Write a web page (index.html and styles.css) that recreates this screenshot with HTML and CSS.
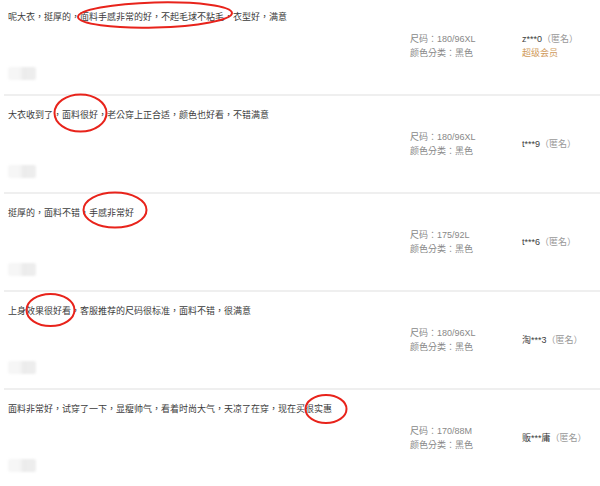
FILE: index.html
```html
<!DOCTYPE html>
<html lang="zh-Hant">
<head>
    <meta charset="UTF-8">
    <meta name="viewport" content="width=device-width, initial-scale=1.0">
    <title>累计评价</title>
    <link rel="stylesheet" href="styles.css">
</head>
<body>
    <div class="rate-list">

        <div class="rate-row">
            <div class="rate-main">
                <p class="rate-text">呢大衣，挺厚的，面料手感非常的好，不起毛球不粘毛，衣型好，满意</p>
                <div class="rate-date"></div>
            </div>
            <div class="rate-sku">
                <p>尺码：180/96XL</p>
                <p>颜色分类：黑色</p>
            </div>
            <div class="rate-user">
                <p><span class="nick">z***0</span><span class="anon">（匿名）</span></p>
                <p class="vip">超级会员</p>
            </div>
            <svg class="mark" viewBox="0 0 600 98">
                <ellipse cx="155" cy="19" rx="77" ry="12.5" transform="rotate(-1.5 155 19)"/>
            </svg>
        </div>

        <div class="rate-row">
            <div class="rate-main">
                <p class="rate-text">大衣收到了，面料很好，老公穿上正合适，颜色也好看，不错满意</p>
                <div class="rate-date"></div>
            </div>
            <div class="rate-sku">
                <p>尺码：180/96XL</p>
                <p>颜色分类：黑色</p>
            </div>
            <div class="rate-user">
                <p><span class="nick">t***9</span><span class="anon">（匿名）</span></p>
            </div>
            <svg class="mark" viewBox="0 0 600 98">
                <ellipse cx="80.5" cy="19" rx="26" ry="18.5"/>
            </svg>
        </div>

        <div class="rate-row">
            <div class="rate-main">
                <p class="rate-text">挺厚的，面料不错，手感非常好</p>
                <div class="rate-date"></div>
            </div>
            <div class="rate-sku">
                <p>尺码：175/92L</p>
                <p>颜色分类：黑色</p>
            </div>
            <div class="rate-user">
                <p><span class="nick">t***6</span><span class="anon">（匿名）</span></p>
            </div>
            <svg class="mark" viewBox="0 0 600 98">
                <ellipse cx="115" cy="18" rx="31.5" ry="17.5"/>
            </svg>
        </div>

        <div class="rate-row">
            <div class="rate-main">
                <p class="rate-text">上身效果很好看，客服推荐的尺码很标准，面料不错，很满意</p>
                <div class="rate-date"></div>
            </div>
            <div class="rate-sku">
                <p>尺码：180/96XL</p>
                <p>颜色分类：黑色</p>
            </div>
            <div class="rate-user">
                <p><span class="nick">淘***3</span><span class="anon">（匿名）</span></p>
            </div>
            <svg class="mark" viewBox="0 0 600 98">
                <ellipse cx="50.5" cy="20" rx="24" ry="16"/>
            </svg>
        </div>

        <div class="rate-row">
            <div class="rate-main">
                <p class="rate-text">面料非常好，试穿了一下，显瘦帅气，看着时尚大气，天凉了在穿，现在买很实惠</p>
                <div class="rate-date"></div>
            </div>
            <div class="rate-sku">
                <p>尺码：170/88M</p>
                <p>颜色分类：黑色</p>
            </div>
            <div class="rate-user">
                <p><span class="nick">贩***庸</span><span class="anon">（匿名）</span></p>
            </div>
            <svg class="mark" viewBox="0 0 600 98">
                <ellipse cx="326" cy="21" rx="20.5" ry="14"/>
            </svg>
        </div>

    </div>
</body>
</html>
```

FILE: styles.css
```css
body {
    margin: 0;
    padding: 0;
    background: #fff;
    font-family: "Liberation Sans", Arial, "Noto Sans CJK TC", sans-serif;
    font-size: 9px;
    color: #3c3c3c;
    overflow: hidden;
}

p {
    margin: 0;
}

.rate-list {
    margin-top: -4px;
}

.rate-row {
    position: relative;
    box-sizing: border-box;
    height: 98px;
    margin-left: 4px;
    border-top: 2px solid #efefef;
    display: grid;
    grid-template-columns: 406px 112px 1fr;
    align-items: center;
}

.rate-main {
    align-self: start;
    padding: 12px 0 0 4px;
}

.rate-text {
    line-height: 14px;
    white-space: nowrap;
}

.rate-date {
    width: 28px;
    height: 13px;
    margin-top: 43px;
    background: linear-gradient(90deg, #f6f6f6 0%, #f6f6f6 40%, #ececec 55%, #eeeeee 100%);
    border-radius: 2px;
    filter: blur(1px);
}

.rate-sku {
    color: #888;
    line-height: 14px;
}

.rate-user {
    line-height: 14px;
}

.rate-user .nick {
    color: #3c3c3c;
}

.rate-user .anon {
    color: #999;
}

.rate-user .vip {
    color: #d09a5a;
}

.mark {
    position: absolute;
    left: -4px;
    top: -2px;
    width: 600px;
    height: 98px;
    pointer-events: none;
    overflow: visible;
}

.mark ellipse {
    fill: none;
    stroke: #e8231b;
    stroke-width: 2;
}
```
